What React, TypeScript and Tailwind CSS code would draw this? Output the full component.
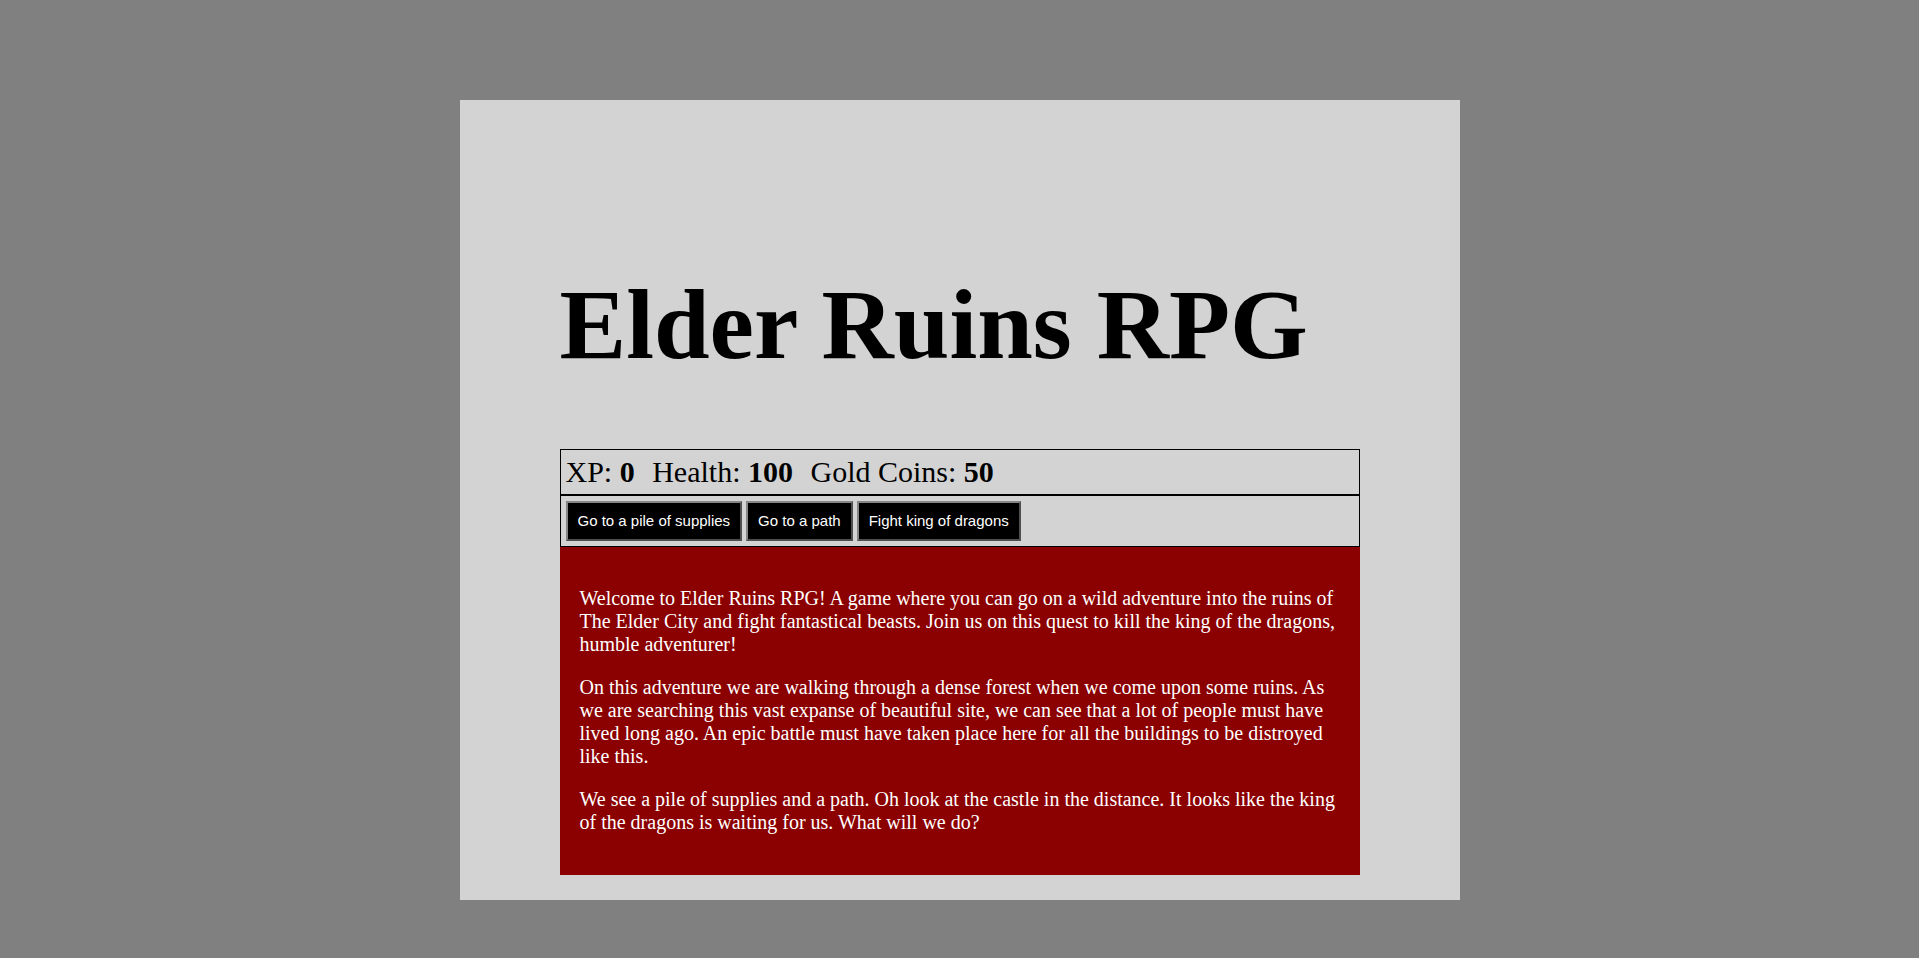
import React from "react";

const btn =
  "bg-black text-white border-2 border-t-[#868686] border-l-[#868686] border-r-[#4f4f4f] border-b-[#4f4f4f] px-[10px] py-[10px] text-[15px] leading-[16px] font-['Liberation_Sans',Arial,sans-serif] cursor-pointer";

export default function App() {
  return (
    <div className="min-h-screen bg-[#808080] pt-[100px] font-['Liberation_Serif','Times_New_Roman',serif]">
      <div className="mx-auto w-[1000px] h-[800px] bg-[#d3d3d3] px-[100px] pt-[100px]">
        <h1 className="my-[67px] text-[100px] leading-[115px] font-bold text-black">
          Elder Ruins RPG
        </h1>
        <div className="border border-black p-[5px] text-[30px] leading-[34px] text-black whitespace-nowrap">
          <span className="pr-[10px]">
            XP: <strong>0</strong>
          </span>{" "}
          <span className="pr-[10px]">
            Health: <strong>100</strong>
          </span>{" "}
          <span className="pr-[10px]">
            Gold Coins: <strong>50</strong>
          </span>
        </div>
        <div className="border border-black p-[5px] flex gap-[4px]">
          <button className={btn}>Go to a pile of supplies</button>
          <button className={btn}>Go to a path</button>
          <button className={btn}>Fight king of dragons</button>
        </div>
        <div className="bg-[#8b0000] text-white px-[20px] pt-[20px] pb-[21px] text-[20px] leading-[23px]">
          <p className="my-[20px]">
            Welcome to Elder Ruins RPG! A game where you can go on a wild adventure into the ruins of The Elder City and fight fantastical beasts. Join us on this quest to kill the king of the dragons, humble adventurer!
          </p>
          <p className="my-[20px]">
            On this adventure we are walking through a dense forest when we come upon some ruins. As we are searching this vast expanse of beautiful site, we can see that a lot of people must have lived long ago. An epic battle must have taken place here for all the buildings to be distroyed like this.
          </p>
          <p className="my-[20px]">
            We see a pile of supplies and a path. Oh look at the castle in the distance. It looks like the king of the dragons is waiting for us. What will we do?
          </p>
        </div>
      </div>
    </div>
  );
}
